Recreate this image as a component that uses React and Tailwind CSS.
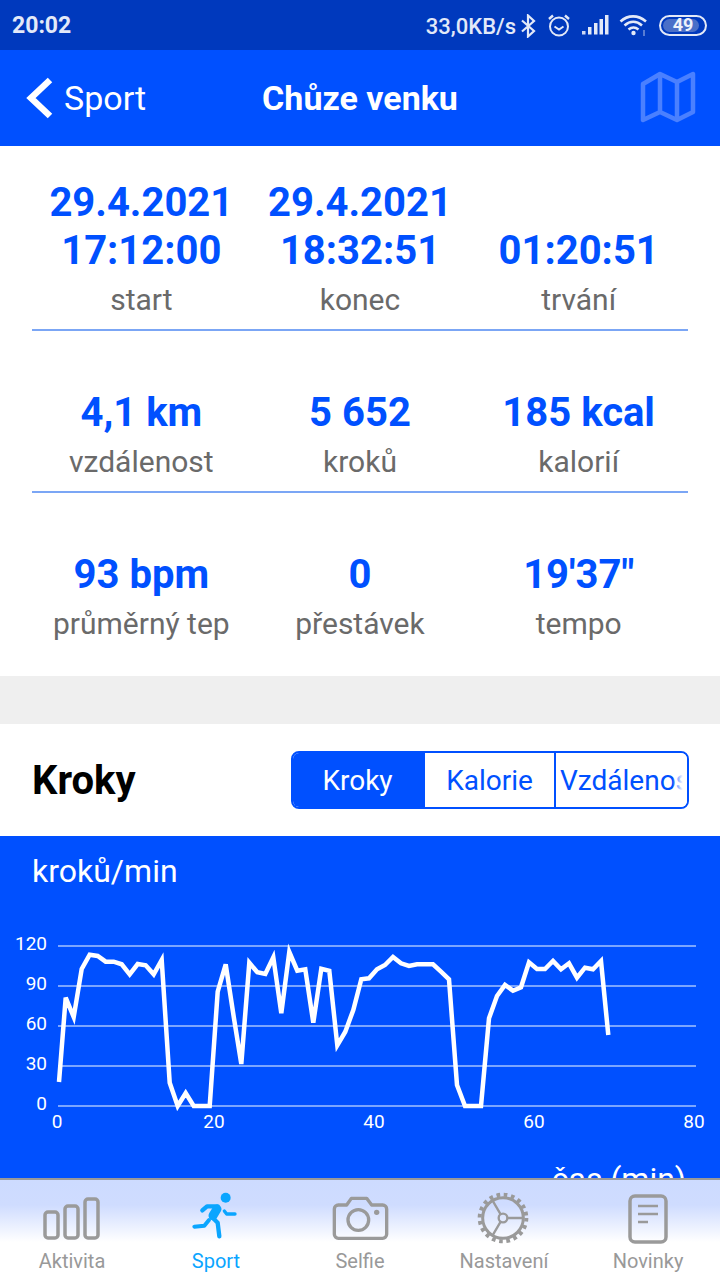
const points = "59,1082 65.7,997.7 73.7,1017 81.7,969 89.7,954.7 97.7,956 105.7,961.7 113.7,961.7 121.7,964.3 129.7,974.3 137.7,964 145.7,965.3 153.7,974.3 161.7,960 169.7,1082.7 177.7,1106 185.7,1093 193.7,1106 201.7,1106 209.7,1106 217.7,991.7 225.7,964.3 233.7,1016.7 241.3,1064 249.3,962.7 257.3,972.3 265.3,974 273.3,957.3 281.3,1013.3 289.3,952 297.3,970.7 305.3,969.3 313.3,1022.7 321.3,968.7 329.3,970.7 337.3,1045.3 345.3,1031.7 353.3,1010 361.3,979.3 369,978.3 377,969.3 385,965 393,957 401,963.3 409,966 417,964.3 425,964.3 433,964.3 441,971.7 449,979.3 457,1085 465,1106 473,1106 481,1106 489,1018.3 497,996 505,985 513,990.7 521,987.3 529,962.3 537,969 545,969 553,961 561,969.3 569,963.3 577,977.7 585,967.7 593,969.3 601,961 608.3,1035";

function Stat({ value, label }) {
  return (
    <div className="flex flex-col items-center">
      <div className="text-[40px] leading-[48px] font-bold text-[#0050ff]">{value}</div>
      <div className="text-[30px] leading-[50px] text-[#6a6a6a]">{label}</div>
    </div>
  );
}

function StatRow({ items, border }) {
  return (
    <div className={`grid h-[162px] grid-cols-3 pt-[58px] ${border ? "border-b-2 border-[#7ba6f5]" : ""}`}>
      {items.map(([v, l]) => <Stat key={l} value={v} label={l} />)}
    </div>
  );
}

function Bluetooth() {
  return (
    <svg width="15" height="24" viewBox="0 0 15 24" fill="none" stroke="#e3e9f8" strokeWidth="2.2" className="mt-[1px]">
      <path d="M1 6.5 13 17 7 22.5V1.5L13 7 1 17.5" />
    </svg>
  );
}

function Alarm() {
  return (
    <svg width="24" height="24" viewBox="0 0 24 24" fill="none" stroke="#e3e9f8" strokeWidth="2">
      <circle cx="12" cy="13.5" r="9" />
      <path d="M7.5 13.5l4.5 3 4.5-3" />
      <path d="M2 6l4-3.5M22 6l-4-3.5" strokeWidth="2.4" />
    </svg>
  );
}

function Signal() {
  return (
    <svg width="27" height="20" viewBox="0 0 27 20" fill="#e3e9f8">
      <rect x="0" y="16" width="3.5" height="3.5" opacity="0.9" />
      <rect x="6" y="12" width="3.5" height="7.5" />
      <rect x="12" y="8" width="3.5" height="11.5" />
      <rect x="17.5" y="4" width="3.5" height="15.5" />
      <rect x="23" y="0" width="3.5" height="19.5" />
    </svg>
  );
}

function Wifi() {
  return (
    <svg width="30" height="23" viewBox="0 0 30 23" fill="none" stroke="#e3e9f8" strokeWidth="2.6">
      <path d="M1.5 7.5C9 .7 19 .7 27 7.5" />
      <path d="M5.5 11.5C11 6.7 17.5 6.7 23 11.5" />
      <path d="M9.5 15.5C13 12.7 16 12.7 19.5 15.5" />
      <circle cx="14.5" cy="19" r="2.2" fill="#e3e9f8" stroke="none" />
      <path d="M25 16v6" stroke="#6f8fd8" strokeWidth="1.6" />
    </svg>
  );
}

function Battery() {
  return (
    <div className="relative flex h-[21px] w-[48px] items-center justify-center overflow-hidden rounded-full border-2 border-[#e3e9f8]">
      <div className="absolute inset-y-[2px] left-[2px] w-[36px] rounded-full bg-[#4a6fc8]" />
      <span className="relative text-[18px] leading-none font-bold text-[#eef2fb]">49</span>
    </div>
  );
}

function NavItem({ label, active, children }) {
  return (
    <div className="flex flex-1 flex-col items-center">
      <div className="flex h-[69px] items-end justify-center">{children}</div>
      <div className={`text-[20px] leading-[24px] ${active ? "text-[#0aa5ff]" : "text-[#999999]"}`}>{label}</div>
    </div>
  );
}

export default function App() {
  const g = "#9a9a9a";
  return (
    <div className="relative flex h-[1280px] w-[720px] flex-col overflow-hidden bg-white [font-family:Roboto,sans-serif]">
      <div className="flex h-[50px] shrink-0 items-center justify-between bg-[#0039bd] pr-[13px] pl-[12px]">
        <span className="pt-[3px] text-[23px] font-bold text-[#e3e9f8]">20:02</span>
        <div className="flex items-center">
          <span className="mr-[5px] pt-[3px] text-[22px] font-medium text-[#e3e9f8]">33,0KB/s</span>
          <div className="mr-[11px]"><Bluetooth /></div>
          <div className="mr-[11px]"><Alarm /></div>
          <div className="mr-[10px]"><Signal /></div>
          <div className="mr-[10px]"><Wifi /></div>
          <Battery />
        </div>
      </div>

      <div className="relative flex h-[96px] shrink-0 items-center justify-center bg-[#0050ff]">
        <div className="absolute left-[26px] flex items-center gap-[11px]">
          <svg width="27" height="42" viewBox="0 0 27 42" fill="none" stroke="#fff" strokeWidth="6.5">
            <path d="M24 3 5 21l19 18" />
          </svg>
          <span className="text-[34px] text-white">Sport</span>
        </div>
        <span className="text-[34px] font-bold text-white">Chůze venku</span>
        <svg className="absolute top-[21px] left-[640px]" width="56" height="54" viewBox="640 71 56 54" fill="none" stroke="#4a80ff" strokeWidth="4.5" strokeLinejoin="round">
          <path d="M643 84 660 74l17 8 16-8v38l-16 8-17-8-17 8zM660 74v39M677 82v38" />
        </svg>
      </div>

      <div className="shrink-0 px-[32px]">
        <div className="grid h-[185px] grid-cols-3 border-b-2 border-[#7ba6f5] pt-[33px]">
          <div className="flex flex-col items-center">
            <div className="text-[40px] leading-[48px] font-bold text-[#0050ff]">29.4.2021</div>
            <div className="text-[40px] leading-[48px] font-bold text-[#0050ff]">17:12:00</div>
            <div className="text-[30px] leading-[50px] text-[#6a6a6a]">start</div>
          </div>
          <div className="flex flex-col items-center">
            <div className="text-[40px] leading-[48px] font-bold text-[#0050ff]">29.4.2021</div>
            <div className="text-[40px] leading-[48px] font-bold text-[#0050ff]">18:32:51</div>
            <div className="text-[30px] leading-[50px] text-[#6a6a6a]">konec</div>
          </div>
          <div className="flex flex-col items-center">
            <div className="h-[48px]" />
            <div className="text-[40px] leading-[48px] font-bold text-[#0050ff]">01:20:51</div>
            <div className="text-[30px] leading-[50px] text-[#6a6a6a]">trvání</div>
          </div>
        </div>
        <StatRow border items={[["4,1 km", "vzdálenost"], ["5 652", "kroků"], ["185 kcal", "kalorií"]]} />
        <StatRow items={[["93 bpm", "průměrný tep"], ["0", "přestávek"], ["19'37\"", "tempo"]]} />
      </div>

      <div className="mt-[21px] h-[48px] shrink-0 bg-[#efefef]" />

      <div className="flex h-[112px] shrink-0 items-center justify-between pr-[31px] pl-[32px]">
        <span className="pt-[2px] text-[40px] font-bold text-black">Kroky</span>
        <div className="flex h-[58px] w-[398px] overflow-hidden rounded-[8px] border-2 border-[#0050ff] text-[28px]">
          <div className="flex w-[132px] items-center justify-center bg-[#0050ff] pt-[1px] pr-[3px] text-white">Kroky</div>
          <div className="flex w-[131px] items-center justify-center border-r-2 border-[#0050ff] pt-[1px] text-[#0050ff]">Kalorie</div>
          <div className="relative flex flex-1 items-center overflow-hidden pt-[1px] pl-[4px] text-[#0050ff]">
            <span className="whitespace-nowrap">Vzdálenost</span>
            <div className="absolute inset-y-0 right-0 w-[14px] bg-gradient-to-r from-white/10 to-white to-70%" />
          </div>
        </div>
      </div>

      <div className="flex-1 bg-[#0050ff]">
        <div className="pt-[15px] pl-[32px] text-[32px] leading-[40px] text-white">kroků/min</div>
        <svg width="720" height="268" viewBox="0 891 720 268" className="block">
          <g stroke="#7ba6ff" strokeWidth="2">
            {[946, 986, 1026, 1066, 1106].map((y) => <line key={y} x1="58" x2="696" y1={y} y2={y} />)}
          </g>
          <g fill="#fff" fontSize="19" textAnchor="end">
            {[["120", 950], ["90", 990], ["60", 1030], ["30", 1070], ["0", 1110]].map(([t, y]) => <text key={t} x="47" y={y}>{t}</text>)}
          </g>
          <g fill="#fff" fontSize="19" textAnchor="middle">
            {[["0", 57], ["20", 214], ["40", 374], ["60", 534], ["80", 694]].map(([t, x]) => <text key={t} x={x} y="1128">{t}</text>)}
          </g>
          <polyline points={points} fill="none" stroke="#fff" strokeWidth="4.5" strokeLinejoin="miter" />
        </svg>
        <div className="pr-[34px] text-right text-[32px] leading-[40px] text-white">čas (min)</div>
      </div>

      <div className="absolute inset-x-0 bottom-0 flex h-[102px] border-t-2 border-[#999999] bg-[linear-gradient(to_bottom,#cddbff_0%,#cfdcff_25%,#ffffff_62%,#ffffff_100%)]">
        <NavItem label="Aktivita">
          <svg width="60" height="44" viewBox="0 0 60 44" fill="none" stroke={g} strokeWidth="3.5" className="mb-[8px]">
            <rect x="3" y="15" width="13" height="26" rx="3" />
            <rect x="23" y="9" width="13" height="32" rx="3" />
            <rect x="43" y="2" width="13" height="39" rx="3" />
          </svg>
        </NavItem>
        <NavItem label="Sport" active>
          <svg width="60" height="60" viewBox="0 0 180 180" fill="none" stroke="#0aa5ff" strokeLinecap="round" strokeLinejoin="round" className="mr-[2px] mb-[4px]">
            <circle cx="122" cy="38" r="15" fill="#0aa5ff" stroke="none" />
            <path d="M52 76 66 64h32" strokeWidth="13" />
            <path d="M96 72 84 92" strokeWidth="27" />
            <path d="M80 95 98 113l5 41" strokeWidth="13" />
            <path d="M72 105 58 122l-30 3" strokeWidth="12" />
            <path d="M118 78l7 9h25" strokeWidth="10" />
          </svg>
        </NavItem>
        <NavItem label="Selfie">
          <svg width="70" height="60" viewBox="0 0 210 180" fill="none" stroke={g} strokeWidth="10" strokeLinejoin="round" className="mb-[4px]">
            <path d="M40 60h25l14-20h46l15 20h33a12 12 0 0 1 12 12v76a12 12 0 0 1-12 12H40a12 12 0 0 1-12-12V72a12 12 0 0 1 12-12z" />
            <circle cx="100" cy="105" r="31" />
            <circle cx="155" cy="82" r="8" fill={g} stroke="none" />
          </svg>
        </NavItem>
        <NavItem label="Nastavení">
          <svg width="70" height="60" viewBox="0 0 210 180" fill="none" stroke={g} className="mb-[4px] ml-[2px]">
            <circle cx="99" cy="99" r="61" strokeWidth="9" />
            <circle cx="99" cy="99" r="70" strokeWidth="12" strokeDasharray="11 11" />
            <circle cx="99" cy="99" r="13" strokeWidth="7" />
            <path d="M112 99h50M92 88 66 44M92 110 66 154" strokeWidth="7" />
          </svg>
        </NavItem>
        <NavItem label="Novinky">
          <svg width="40" height="50" viewBox="0 0 40 50" fill="none" stroke={g} strokeWidth="3.5" className="mb-[5px]">
            <rect x="2" y="2" width="36" height="46" rx="5" />
            <path d="M10 12h20M10 20h20M10 28h10" strokeWidth="2.5" />
          </svg>
        </NavItem>
      </div>
    </div>
  );
}
